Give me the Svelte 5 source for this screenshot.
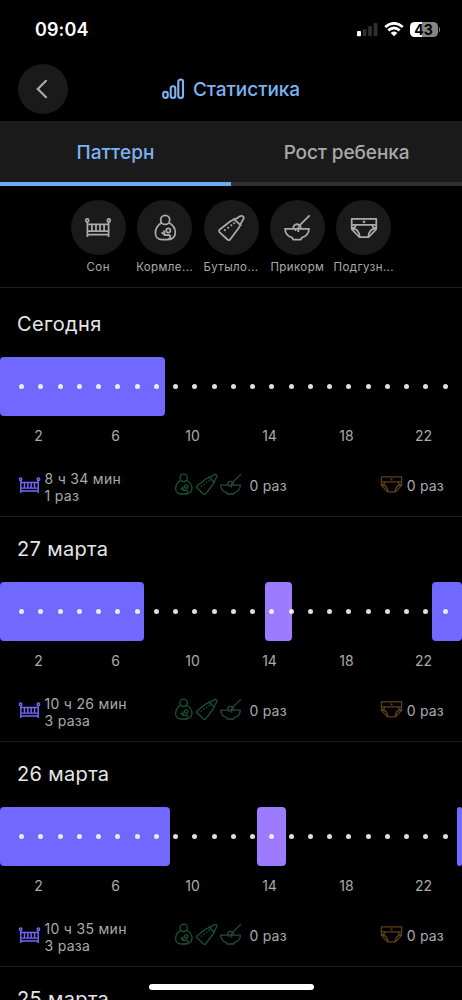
<script>
  const filters = [
    { icon: 'bed', label: 'Сон' },
    { icon: 'nursing', label: 'Кормле...' },
    { icon: 'bottle', label: 'Бутыло...' },
    { icon: 'bowl', label: 'Прикорм' },
    { icon: 'diaper', label: 'Подгузн...' }
  ];
  const hours = [2, 6, 10, 14, 18, 22];
  const dots = Array.from({ length: 23 }, (_, i) => i + 1);
  // Bars are given as [start, end] in hours of the day.
  const days = [
    { title: 'Сегодня', sleep: '8 ч 34 мин', times: '1 раз', bars: [[0, 8.57]] },
    { title: '27 марта', sleep: '10 ч 26 мин', times: '3 раза', bars: [[0, 7.5], [13.77, 15.17, true], [22.44, 24]] },
    { title: '26 марта', sleep: '10 ч 35 мин', times: '3 раза', bars: [[0, 8.83], [13.37, 14.85, true], [23.72, 24]] },
    { title: '25 марта', bars: [] }
  ];
  const pct = (h) => (h / 24) * 100;
</script>

{#snippet glyph(name)}
  <svg class="glyph {name}" viewBox="0 0 28 28" aria-hidden="true">
    {#if name === 'bed'}
      <circle cx="3.200" cy="6.400" r="1.500" />
      <circle cx="24.800" cy="6.400" r="1.500" />
      <path d="M3.400 8v15M24.600 8v15M3.400 10.300h21.200M3.400 17.200h21.200M3.400 20.600h21.200M7.900 10.300v6.900M12 10.300v6.900M16 10.300v6.900M20.100 10.300v6.900" />
    {:else if name === 'nursing'}
      <circle cx="14.200" cy="5.900" r="4.500" />
      <path d="M10.400 8.800C6.800 11.200 4.400 15.400 4.400 19C4.400 23.200 7.400 25.600 11 25.600H17C21.400 25.600 24.300 22.600 24.300 18.600C24.300 14.800 21.600 10.800 18 8.800" />
      <circle cx="17.300" cy="16.500" r="2.100" />
      <path d="M10.500 18.300l3.300 2.900 5-.4M12.900 16.300l.9 4.900M19.300 21c.4 2.500-.8 4.200-2.800 4.500" />
    {:else if name === 'bottle'}
      <path d="M16.700 5.900L14 6.800L3.100 15.200Q1.300 16.800 2.700 18.300L10.400 25.500Q12.100 26.900 13.300 25.200L21.700 14L22.800 11.600" />
      <path d="M16.200 4.300l8 7.600M17.700 5.400C19.600 4.900 20.800 3.700 22.400 2.500C25.400.700 28 3 26 5.700C24.900 7.300 23.900 8.500 23.500 10.800" />
      <path d="M7.200 15.400l1.400 1.400M10.400 13l1.400 1.400M13.600 10.600l1.400 1.400M16.500 8.500l1.300 1.300" />
    {:else if name === 'bowl'}
      <path d="M2 14.800h24c-.2 4.400-3.200 7.700-7.100 8.900l-1 1.900H10.100l-1-1.900C5.200 22.500 2.200 19.200 2 14.800Z" />
      <path d="M10.400 14.800C9.800 11.300 13.400 9 16.300 11.100C18 12.300 18 13.500 17.400 14.800M26.700 1.400L15.600 12.300M15.300 12.800v5.200M12.500 15v2" />
    {:else if name === 'diaper'}
      <path d="M1.700 4.800h24.600v10.300L18.800 23H9.200L1.700 15.100ZM1.700 10.800h24.600M1.700 14.300c5.100 0 7.500 3 8.100 8.700M26.300 14.300c-5.100 0-7.500 3-8.100 8.700M5.800 10.800c.1 2-1.700 3.400-4.100 3.500M22.200 10.800c-.1 2 1.700 3.400 4.100 3.500" />
      <circle cx="14" cy="7.800" r=".5" />
    {/if}
  </svg>
{/snippet}

<div class="screen">
  <div class="status">
    <span class="time">09:04</span>
    <div class="indicators">
      <svg width="21" height="15" viewBox="0 0 21 15">
        <rect x="0" y="9" width="4" height="5.200" rx="1" fill="#fff" />
        <g fill="#303030">
          <rect x="5.700" y="7" width="3.700" height="7.200" rx="1" />
          <rect x="11.200" y="4" width="3.700" height="10.200" rx="1" />
          <rect x="16.700" y="1" width="3.700" height="13.200" rx="1" />
        </g>
      </svg>
      <svg class="wifi" width="20" height="15" viewBox="0 0 20 15" fill="none" stroke="#fff" stroke-width="2.700">
        <path d="M1.200 5.100Q10-2.500 18.800 5.100M4.300 8.400Q10 3.600 15.700 8.400" />
        <path d="M6.700 10.900Q10 8.300 13.300 10.900L10 14.300Z" fill="#fff" stroke="none" />
      </svg>
      <div class="battery"><span>43</span></div>
      <i class="cap"></i>
    </div>
  </div>

  <header>
    <button class="back" aria-label="Назад">
      <svg width="12" height="20" viewBox="0 0 12 20"><path d="M10 1.800L1.800 10l8.200 8.200" /></svg>
    </button>
    <h1>
      <svg width="23" height="22" viewBox="0 0 23 22">
        <rect x="1.200" y="13.700" width="4.500" height="6.300" rx="2.200" />
        <rect x="8.700" y="8.200" width="4.600" height="11.800" rx="2.200" />
        <rect x="16.300" y="1.500" width="4.700" height="18.500" rx="2.200" />
      </svg>
      <span>Статистика</span>
    </h1>
  </header>

  <nav>
    <button class="tab active"><span>Паттерн</span></button>
    <button class="tab"><span>Рост ребенка</span></button>
  </nav>

  <div class="filters">
    {#each filters as f}
      <div class="filter">
        <div class="disc">{@render glyph(f.icon)}</div>
        <span>{f.label}</span>
      </div>
    {/each}
  </div>

  <main>
    {#each days as day}
      <section>
        <h2>{day.title}</h2>
        {#if day.bars.length}
          <div class="track">
            {#each day.bars as [from, to, nap]}
              <div class="bar" class:nap style="left:{pct(from)}%;width:{pct(to - from)}%"></div>
            {/each}
            <div class="dots">
              {#each dots as d (d)}<i></i>{/each}
            </div>
          </div>
          <div class="hours">
            {#each hours as h}<span>{h}</span>{/each}
          </div>
          <div class="stats">
            <div class="stat sleep">
              {@render glyph('bed')}
              <p>{day.sleep}<br />{day.times}</p>
            </div>
            <div class="stat food">
              {@render glyph('nursing')}{@render glyph('bottle')}{@render glyph('bowl')}
              <p>0 раз</p>
            </div>
            <div class="stat change">
              {@render glyph('diaper')}
              <p>0 раз</p>
            </div>
          </div>
        {/if}
      </section>
    {/each}
  </main>
  <div class="home"></div>
</div>

<style>
  :global(body) { background: #000; }
  .screen {
    position: relative;
    width: 462px;
    height: 1000px;
    overflow: hidden;
    background: #000;
    color: #aaa;
    font-family: Inter, "Liberation Sans", sans-serif;
  }
  button { border: 0; padding: 0; font: inherit; color: inherit; background: none; }
  h1, h2, p { margin: 0; font-weight: 400; }
  .status {
    display: flex;
    justify-content: space-between;
    align-items: center;
    height: 59px;
    box-sizing: border-box;
    padding: 0 22px 0 35px;
  }
  .time { color: #fff; font-size: 18px; font-weight: 600; letter-spacing: .1px; }
  .indicators { display: flex; align-items: center; }
  .wifi { margin: 0 6px; }
  .battery {
    width: 28px;
    height: 15px;
    border-radius: 4.500px;
    background: linear-gradient(90deg, #fff 43%, #858585 43%);
    color: #000;
    font-size: 14px;
    font-weight: 700;
    line-height: 15px;
    text-align: center;
  }
  .cap { width: 1.500px; height: 5px; margin-left: 1px; border-radius: 0 2px 2px 0; background: #777; }
  header {
    display: grid;
    grid-template-columns: 50px 1fr 50px;
    align-items: center;
    height: 62px;
    padding: 0 18px 2px;
    box-sizing: border-box;
  }
  .back {
    display: flex;
    align-items: center;
    justify-content: center;
    width: 50px;
    height: 50px;
    border-radius: 50%;
    background: #1a1a1a;
  }
  .back svg { fill: none; stroke: #aaa; stroke-width: 2.200; stroke-linecap: round; margin-right: 3px; }
  h1 {
    display: flex;
    justify-content: center;
    align-items: center;
    gap: 8px;
    color: #7db3f2;
    font-size: 19px;
    font-weight: 500;
    letter-spacing: -.05px;
  }
  h1 svg { fill: none; stroke: currentColor; stroke-width: 2.100; }
  nav { display: grid; grid-template-columns: 1fr 1fr; height: 65px; background: #1a1a1a; }
  .tab { border-bottom: 4px solid #303030; font-size: 19px; font-weight: 500; padding-top: 2px; letter-spacing: -.1px; }
  .tab.active { color: #7db3f2; border-color: #6fa9ee; letter-spacing: .1px; }
  .filters {
    display: flex;
    justify-content: center;
    gap: 4.400px;
    height: 102px;
    box-sizing: border-box;
    padding-top: 14px;
    border-bottom: 1px solid #1d1d1d;
  }
  .filter { display: flex; flex-direction: column; align-items: center; width: 62px; font-size: 11.500px; letter-spacing: .4px; white-space: nowrap; }
  .filter span { margin-top: 4px; line-height: 16px; }
  .disc { display: flex; align-items: center; justify-content: center; width: 55px; height: 55px; border-radius: 50%; background: #1a1a1a; }
  .glyph { flex: none; width: 28px; height: 28px; fill: none; stroke: currentColor; stroke-width: 1.750; stroke-linejoin: round; }
  main { padding-top: 4px; }
  section { height: 225px; box-sizing: border-box; border-bottom: 1px solid #1b1b1b; }
  h2 { height: 65px; line-height: 65px; padding-left: 17px; color: #e6e6e6; font-size: 20px; letter-spacing: .35px; }
  .track { position: relative; height: 59px; }
  .bar { position: absolute; top: 0; height: 100%; border-radius: 4px; background: #7068ff; }
  .bar.nap { background: #9c7bff; }
  .dots { position: relative; display: flex; align-items: center; height: 100%; padding-left: 19px; }
  .dots i { flex: none; width: 5px; height: 5px; margin-right: 14.250px; border-radius: 50%; background: rgba(255, 255, 255, .87); }
  .hours { display: grid; grid-template-columns: repeat(6, 1fr); height: 40px; line-height: 40px; text-align: center; font-size: 14px; }
  .stats { display: grid; grid-template-columns: 155px 1fr auto; height: 60px; padding: 0 18px 0 17px; align-items: center; }
  .stat { display: flex; align-items: center; font-size: 14px; line-height: 17px; letter-spacing: .3px; }
  .stat .glyph { width: 23px; height: 23px; margin-top: -2px; }
  .stat p { margin-left: 4px; }
  .sleep p { padding-top: 1px; }
  .sleep .glyph { color: #7068ff; margin-left: .5px; }
  .food .glyph { color: #1c5038; margin-left: 0; }
  .food .nursing { margin-left: -.5px; }
  .food .glyph, .change .glyph { stroke-width: 1.600; }
  .food .bowl { margin-left: 1px; color: #27493d; }
  .food p { margin-left: 8px; letter-spacing: .2px; }
  .stat.food, .stat.change { padding-bottom: 1px; }
  .change p { letter-spacing: .2px; }
  .change .glyph { color: #5c4019; }
  .home { position: absolute; left: 149px; bottom: 10px; width: 165px; height: 6px; border-radius: 3px; background: #fff; }
</style>
